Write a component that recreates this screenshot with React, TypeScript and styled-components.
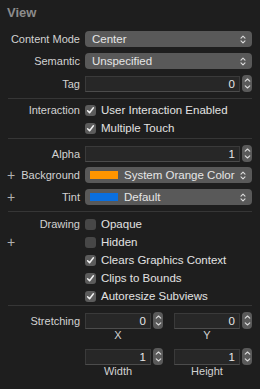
import React from 'react';
import styled, { createGlobalStyle } from 'styled-components';

const Global = createGlobalStyle`
  html, body {
    margin: 0;
    padding: 0;
    background: #1e1e1e;
  }
  body {
    font-family: "Liberation Sans", Arial, sans-serif;
    -webkit-font-smoothing: antialiased;
  }
`;

const Panel = styled.div`
  width: 260px;
  height: 389px;
  background: #1e1e1e;
  overflow: hidden;
`;

const Header = styled.div`
  height: 25px;
  padding: 5px 0 0 7px;
  box-sizing: border-box;
  font-size: 13px;
  font-weight: bold;
  color: #8c8c8c;
`;

const Section = styled.div<{ $top: number; $bottom: number; $gap: number }>`
  display: flex;
  flex-direction: column;
  gap: ${(p) => p.$gap}px;
  padding: ${(p) => p.$top}px 0 ${(p) => p.$bottom}px;
`;

const Separator = styled.div`
  height: 1px;
  margin: 0 8px;
  background: #363636;
`;

const Spacer = styled.div`
  height: 6px;
`;

const Row = styled.div`
  display: grid;
  grid-template-columns: 80px 1fr;
  column-gap: 5px;
  padding-right: 8px;
  height: 16px;
  align-items: center;
`;

const LabelCell = styled.div`
  display: flex;
  justify-content: space-between;
  align-items: center;
  padding-left: 7px;
  font-size: 11px;
  color: #d2d2d2;
  white-space: nowrap;
`;

const Plus = styled.span`
  font-size: 14px;
  font-weight: 300;
  color: #b0b0b0;
  line-height: 1;
`;

const Popup = styled.div`
  height: 16px;
  border-radius: 4px;
  background: #595959;
  display: flex;
  align-items: center;
  padding: 0 6px 0 5px;
  font-size: 11.5px;
  color: #e6e6e6;
  gap: 4px;
`;

const PopupText = styled.span`
  flex: 1;
  white-space: nowrap;
  padding-left: 2px;
`;

const Swatch = styled.span<{ $color: string }>`
  width: 28px;
  height: 8px;
  background: ${(p) => p.$color};
  flex: none;
`;

const FieldGroup = styled.div`
  display: flex;
  align-items: center;
  gap: 2px;
`;

const Field = styled.div`
  flex: 1;
  height: 16px;
  box-sizing: border-box;
  background: #272727;
  border: 1px solid #3a3a3a;
  border-bottom-color: #4c4c4c;
  display: flex;
  align-items: center;
  justify-content: flex-end;
  padding-right: 4px;
  font-size: 11.5px;
  color: #e6e6e6;
`;

const StepperBox = styled.div`
  width: 10px;
  height: 17px;
  border-radius: 4px;
  background: #5a5a5a;
  flex: none;
  display: flex;
  align-items: center;
  justify-content: center;
`;

const Check = styled.div`
  display: flex;
  align-items: center;
  gap: 5px;
  font-size: 11.5px;
  color: #e2e2e2;
  white-space: nowrap;
`;

const Box = styled.span<{ $on: boolean }>`
  width: 11px;
  height: 11px;
  border-radius: 3px;
  background: ${(p) => (p.$on ? '#5c5c5c' : '#474747')};
  display: flex;
  align-items: center;
  justify-content: center;
  flex: none;
`;

const Pair = styled.div`
  display: grid;
  grid-template-columns: 1fr 1fr;
  column-gap: 11px;
`;

const SubLabels = styled.div`
  display: grid;
  grid-template-columns: 80px 1fr;
  column-gap: 5px;
  padding-right: 8px;
  height: 14px;
  align-items: center;
`;

const SubLabel = styled.div`
  padding-right: 12px;
  text-align: center;
  font-size: 11px;
  color: #d2d2d2;
`;

const UpDown = () => (
  <svg width="6" height="9" viewBox="0 0 6 9">
    <path d="M1 3.2 L3 1.2 L5 3.2 M1 5.8 L3 7.8 L5 5.8" fill="none" stroke="#dcdcdc" strokeWidth="1.1" strokeLinecap="round" strokeLinejoin="round" />
  </svg>
);

const StepArrows = () => (
  <svg width="7" height="13" viewBox="0 0 7 13">
    <path d="M1.2 4.2 L3.5 2 L5.8 4.2 M1.2 8.8 L3.5 11 L5.8 8.8" fill="none" stroke="#dcdcdc" strokeWidth="1.1" strokeLinecap="round" strokeLinejoin="round" />
  </svg>
);

const Tick = () => (
  <svg width="9" height="9" viewBox="0 0 9 9">
    <path d="M1.6 4.7 L3.6 6.8 L7.4 1.8" fill="none" stroke="#f2f2f2" strokeWidth="1.5" strokeLinecap="round" strokeLinejoin="round" />
  </svg>
);

const Label = ({ text, plus }: { text: string; plus?: boolean }) => (
  <LabelCell>
    <Plus>{plus ? '+' : ''}</Plus>
    <span>{text}</span>
  </LabelCell>
);

const Select = ({ value, swatch }: { value: string; swatch?: string }) => (
  <Popup>
    {swatch && <Swatch $color={swatch} />}
    <PopupText>{value}</PopupText>
    <UpDown />
  </Popup>
);

const Stepper = ({ value }: { value: string }) => (
  <FieldGroup>
    <Field>{value}</Field>
    <StepperBox>
      <StepArrows />
    </StepperBox>
  </FieldGroup>
);

const CheckItem = ({ text, on }: { text: string; on: boolean }) => (
  <Check>
    <Box $on={on}>{on && <Tick />}</Box>
    {text}
  </Check>
);

export default function App() {
  return (
    <Panel>
      <Global />
      <Header>View</Header>
      <Section $top={6} $bottom={7} $gap={6}>
        <Row>
          <Label text="Content Mode" />
          <Select value="Center" />
        </Row>
        <Row>
          <Label text="Semantic" />
          <Select value="Unspecified" />
        </Row>
        <Row>
          <Label text="Tag" />
          <Stepper value="0" />
        </Row>
      </Section>
      <Separator />
      <Section $top={3} $bottom={2} $gap={2}>
        <Row>
          <Label text="Interaction" />
          <CheckItem text="User Interaction Enabled" on />
        </Row>
        <Row>
          <Label text="" />
          <CheckItem text="Multiple Touch" on />
        </Row>
      </Section>
      <Separator />
      <Section $top={6} $bottom={6} $gap={6}>
        <Row>
          <Label text="Alpha" />
          <Stepper value="1" />
        </Row>
        <Row>
          <Label text="Background" plus />
          <Select value="System Orange Color" swatch="#ff9500" />
        </Row>
        <Row>
          <Label text="Tint" plus />
          <Select value="Default" swatch="#0a6fdf" />
        </Row>
      </Section>
      <Separator />
      <Section $top={4} $bottom={1} $gap={2}>
        <Row>
          <Label text="Drawing" />
          <CheckItem text="Opaque" on={false} />
        </Row>
        <Row>
          <Label text="" plus />
          <CheckItem text="Hidden" on={false} />
        </Row>
        <Row>
          <Label text="" />
          <CheckItem text="Clears Graphics Context" on />
        </Row>
        <Row>
          <Label text="" />
          <CheckItem text="Clips to Bounds" on />
        </Row>
        <Row>
          <Label text="" />
          <CheckItem text="Autoresize Subviews" on />
        </Row>
      </Section>
      <Separator />
      <Section $top={6} $bottom={0} $gap={0}>
        <Row>
          <Label text="Stretching" />
          <Pair>
            <Stepper value="0" />
            <Stepper value="0" />
          </Pair>
        </Row>
        <SubLabels>
          <span />
          <Pair>
            <SubLabel>X</SubLabel>
            <SubLabel>Y</SubLabel>
          </Pair>
        </SubLabels>
        <Spacer />
        <Row>
          <Label text="" />
          <Pair>
            <Stepper value="1" />
            <Stepper value="1" />
          </Pair>
        </Row>
        <SubLabels>
          <span />
          <Pair>
            <SubLabel>Width</SubLabel>
            <SubLabel>Height</SubLabel>
          </Pair>
        </SubLabels>
      </Section>
    </Panel>
  );
}
